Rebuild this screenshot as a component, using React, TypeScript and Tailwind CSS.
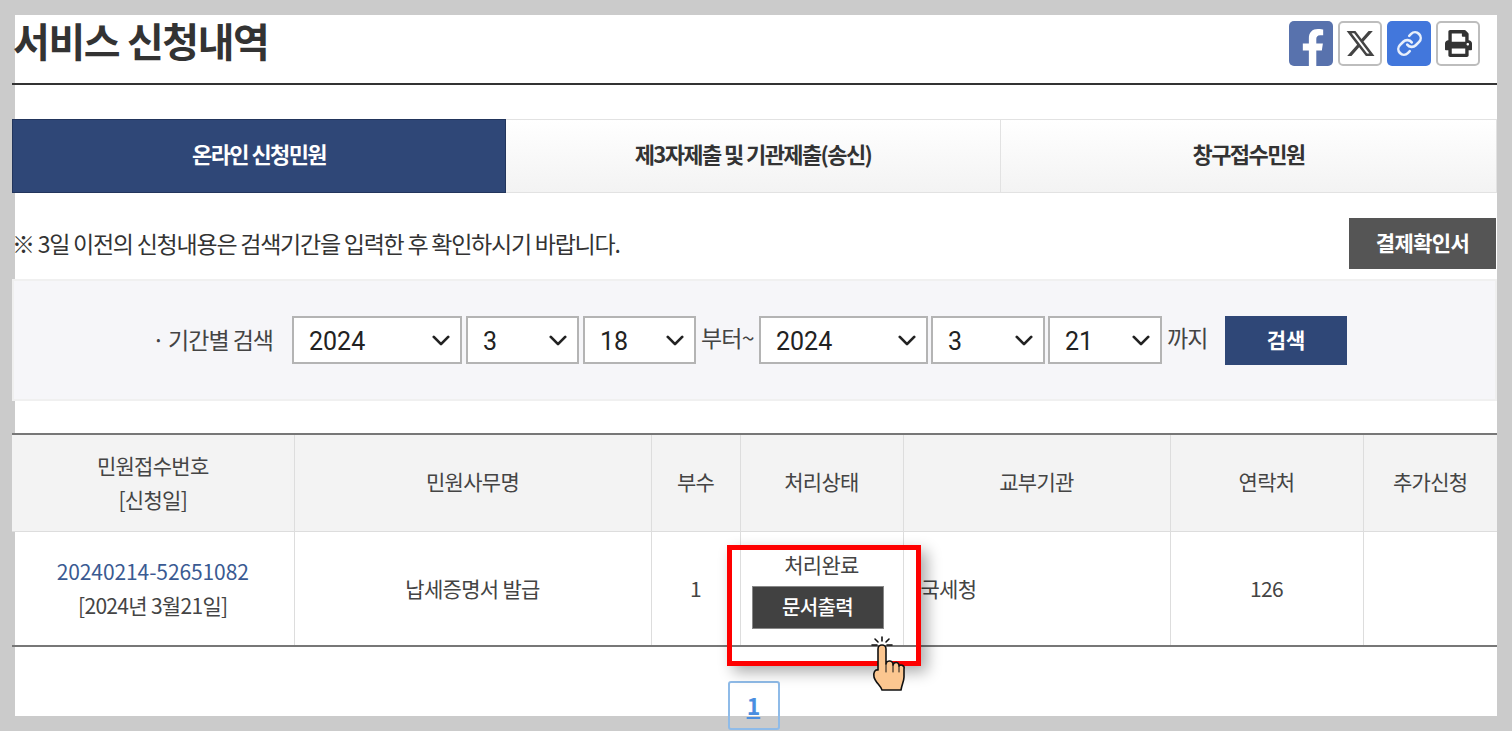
import React from "react";
import { FaFacebookF, FaPrint } from "react-icons/fa";
import { FaXTwitter } from "react-icons/fa6";
import { Link } from "lucide-react";

const font = { fontFamily: '"Noto Sans CJK KR", "Noto Sans", sans-serif' };

function Sel({ value, w }: { value: string; w: string }) {
  return (
    <div className={`relative h-[48px] shrink-0 ${w}`}>
      <select
        defaultValue={value}
        className="h-full w-full appearance-none rounded-none border-2 border-[#b4b4b4] bg-white pl-[15px] pt-[2px] text-[25px] leading-none text-[#222] outline-none"
        style={{ fontFamily: 'Roboto, "Noto Sans", sans-serif' }}
      >
        <option>{value}</option>
      </select>
      <svg viewBox="0 0 20 12" className="pointer-events-none absolute right-[12px] top-[19px] h-[11px] w-[18px]" fill="none" stroke="#222" strokeWidth="3" strokeLinecap="round" strokeLinejoin="round">
        <path d="M2 2l8 8 8-8" />
      </svg>
    </div>
  );
}

function Hand() {
  return (
    <svg viewBox="0 0 36 56" className="h-[56px] w-[36px]" strokeLinecap="round" strokeLinejoin="round">
      <g stroke="#111" strokeWidth="1.6" fill="none">
        <path d="M11 1v4M1 9h5M16 9h5M4 3l3 3M18 3l-3 3" />
      </g>
      <path
        d="M7 34V13a4 4 0 0 1 8 0v15a3.5 3.5 0 0 1 7 1 3 3 0 0 1 6 1 3 3 0 0 1 5 3v8c0 4-2 7-3 13H11c-1-4-7-8-8-13-1-4 1-8 4-7z"
        fill="#fbc690"
        stroke="#111"
        strokeWidth="1.6"
      />
      <path d="M15 28v8M22 29v7M28 30v6" stroke="#111" strokeWidth="1" fill="none" />
    </svg>
  );
}

const tabs = ["온라인 신청민원", "제3자제출 및 기관제출(송신)", "창구접수민원"];
const heads = ["민원사무명", "부수", "처리상태", "교부기관", "연락처", "추가신청"];

export default function App() {
  return (
    <div className="h-[731px] w-[1512px] overflow-hidden bg-[#cbcbcb] pl-[15px] pt-[15px] text-[#333]" style={font}>
      <div className="h-[701px] w-[1482px] bg-white">
        <div className="relative ml-[-3px] w-[1485px]">
          {/* Title */}
          <div className="flex h-[70px] items-start justify-between border-b-[2px] border-[#333] pr-[17px]">
            <h1 className="mt-[-2px] pl-[1px] text-[40px] font-bold leading-[54px] tracking-[-1.4px] text-[#333]">서비스 신청내역</h1>
            <div className="mt-[6px] flex gap-[5px]">
              <div className="flex h-[45px] w-[44px] items-end justify-center overflow-hidden rounded-[5px] bg-[#5872ad] pl-[3px] text-white">
                <FaFacebookF className="mb-[-1px] h-[38px] w-[24px]" />
              </div>
              <div className="flex h-[45px] w-[44px] items-center justify-center rounded-[5px] border-2 border-[#bdbdbd] bg-white text-[#444]">
                <FaXTwitter className="h-[31px] w-[31px]" />
              </div>
              <div className="flex h-[45px] w-[44px] items-center justify-center rounded-[5px] bg-[#4277dc] text-[#e8effb]">
                <Link className="h-[27px] w-[27px]" strokeWidth={2.3} />
              </div>
              <div className="flex h-[45px] w-[44px] items-center justify-center rounded-[5px] border-2 border-[#bdbdbd] bg-white text-[#333]">
                <FaPrint className="h-[27px] w-[27px]" />
              </div>
            </div>
          </div>

          {/* Tabs */}
          <div className="mt-[34px] flex h-[74px]">
            <div className="flex w-[494px] items-center justify-center border border-[#22355c] bg-[#2f4777] pb-[5px] text-[22px] font-bold tracking-[-1.6px] text-white">{tabs[0]}</div>
            <div className="flex w-[495px] items-center justify-center border-y border-r border-[#e2e2e2] bg-gradient-to-b from-white to-[#f3f3f3] pb-[5px] text-[22px] font-bold tracking-[-1.6px] text-[#333]">{tabs[1]}</div>
            <div className="flex w-[496px] items-center justify-center border-y border-r border-[#e2e2e2] bg-gradient-to-b from-white to-[#f3f3f3] pb-[5px] text-[22px] font-bold tracking-[-1.6px] text-[#333]">{tabs[2]}</div>
          </div>

          {/* Note */}
          <div className="mt-[24px] flex h-[52px] items-center justify-between pr-[1px]">
            <p className="text-[23px] tracking-[-1.24px] text-[#333]">※ 3일 이전의 신청내용은 검색기간을 입력한 후 확인하시기 바랍니다.</p>
            <div className="flex h-[51px] w-[147px] items-center justify-center bg-[#555555] text-[21px] font-bold tracking-[-0.6px] text-white">결제확인서</div>
          </div>

          {/* Search */}
          <div className="mt-[10px] flex h-[122px] items-center border-2 border-[#f0f0f0] bg-[#f6f6f9] pl-[138px]">
            <span className="w-[140px] shrink-0 pb-[2px] text-[23px] tracking-[-1px] text-[#444]">· 기간별 검색</span>
            <div className="flex items-center">
              <Sel value="2024" w="w-[170px]" />
              <div className="w-[4px]" />
              <Sel value="3" w="w-[113px]" />
              <div className="w-[4px]" />
              <Sel value="18" w="w-[113px]" />
              <span className="w-[63px] shrink-0 pb-[6px] pl-[5px] text-[23px] tracking-[-0.8px] text-[#444]">부터~</span>
              <Sel value="2024" w="w-[169px]" />
              <div className="w-[3px]" />
              <Sel value="3" w="w-[114px]" />
              <div className="w-[3px]" />
              <Sel value="21" w="w-[114px]" />
              <span className="w-[63px] shrink-0 pb-[6px] pl-[5px] text-[23px] tracking-[-1px] text-[#444]">까지</span>
              <div className="flex h-[49px] w-[122px] items-center justify-center bg-[#2f4777] text-[21px] font-bold text-white">검색</div>
            </div>
          </div>

          {/* Table */}
          <table className="mt-[32px] w-[1485px] table-fixed border-collapse border-y-2 border-[#777] text-center text-[21px] tracking-[-0.7px] text-[#444]">
            <colgroup>
              <col className="w-[282px]" />
              <col className="w-[357px]" />
              <col className="w-[89px]" />
              <col className="w-[163px]" />
              <col className="w-[267px]" />
              <col className="w-[193px]" />
              <col className="w-[134px]" />
            </colgroup>
            <thead>
              <tr className="h-[97px] border-b border-[#ddd] bg-[#f3f3f3]">
                <th className="border-r border-[#ddd] pb-[2px] font-normal leading-[34px]">민원접수번호<br />[신청일]</th>
                {heads.map((h, i) => (
                  <th key={h} className={`pb-[2px] font-normal ${i < 5 ? "border-r border-[#ddd]" : ""}`}>{h}</th>
                ))}
              </tr>
            </thead>
            <tbody>
              <tr className="h-[115px]">
                <td className="border-r border-[#ddd] leading-[34px]">
                  <span className="tracking-[-0.1px] text-[#3a5a92]">20240214-52651082</span>
                  <br />[2024년 3월21일]
                </td>
                <td className="border-r border-[#ddd]">납세증명서 발급</td>
                <td className="border-r border-[#ddd]">1</td>
                <td className="border-r border-[#ddd]">
                  <div className="flex flex-col items-center">
                    <span className="leading-[32px]">처리완료</span>
                    <div className="mr-[8px] mt-[6px] flex h-[43px] w-[132px] items-center justify-center border border-[#888] bg-[#414141] text-[20px] font-medium text-white">문서출력</div>
                  </div>
                </td>
                <td className="border-r border-[#ddd] pl-[17px] text-left">국세청</td>
                <td className="border-r border-[#ddd]">126</td>
                <td />
              </tr>
            </tbody>
          </table>

          {/* Pagination */}
          <div className="mt-[34px] flex justify-center pr-[2px]">
            <div className="flex h-[49px] w-[52px] items-center justify-center rounded-[3px] border-2 border-[#8fbbe8] text-[23px] font-bold text-[#4a8ee0] underline">1</div>
          </div>

          {/* Annotation overlay */}
          <div className="absolute left-[715px] top-[530px] h-[121px] w-[194px] border-[5px] border-[#fe0000] shadow-[6px_6px_14px_rgba(0,0,0,0.33)]" />
          <div className="absolute left-[859px] top-[621px]"><Hand /></div>
        </div>
      </div>
    </div>
  );
}
